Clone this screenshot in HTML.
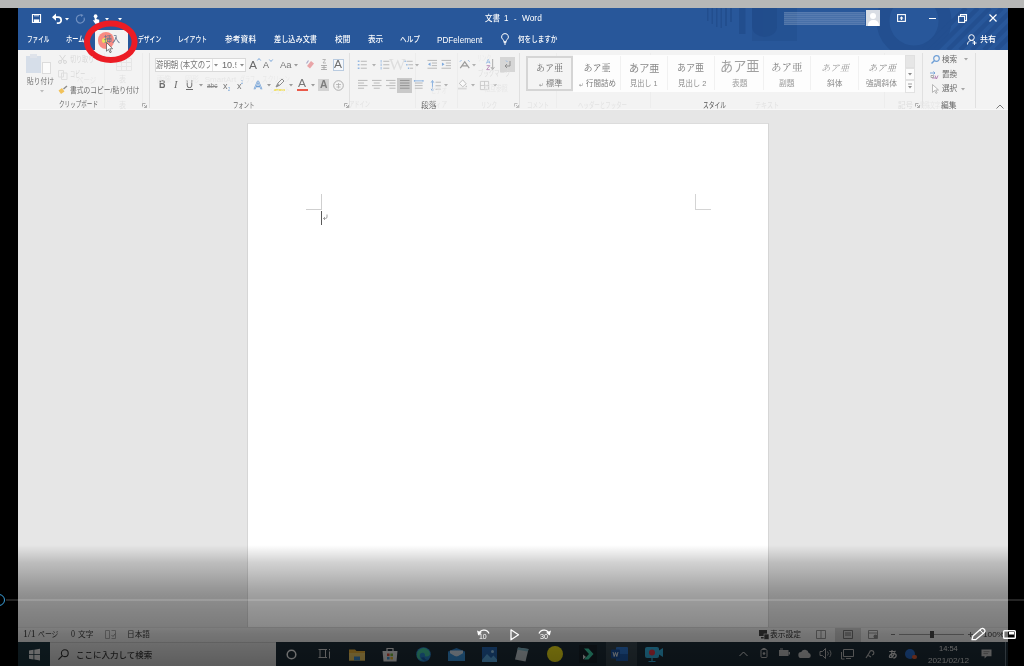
<!DOCTYPE html>
<html lang="ja">
<head>
<meta charset="utf-8">
<title>文書 1 - Word</title>
<style>
html,body{margin:0;padding:0;}
body{width:1024px;height:666px;overflow:hidden;background:#000;position:relative;
  font-family:"Liberation Sans","Noto Sans CJK JP",sans-serif;font-size:8px;color:#444;}
.abs,.t,svg.i{position:absolute;}
.t{white-space:nowrap;line-height:12px;transform-origin:0 50%;}
svg.i{overflow:visible;}
#win{left:0;top:0;width:1024px;height:666px;background:#e6e6e6;overflow:hidden;filter:blur(0.45px);}
#title{left:0;top:8px;width:1024px;height:42px;background:#28579a;overflow:hidden;}
#ribbon{left:0;top:50px;width:1024px;height:60px;background:#f3f3f3;overflow:hidden;}
#ribbon .sep{position:absolute;top:3px;width:1px;height:55px;background:#e0e0e0;}
#page{left:247px;top:123px;width:522px;height:504px;background:#fff;border-left:1px solid #d6d6d6;border-right:1px solid #d6d6d6;border-top:1px solid #dcdcdc;box-sizing:border-box;}
#status{left:0;top:627px;width:1024px;height:15px;background:#eeeeee;border-top:1px solid #dddddd;box-sizing:border-box;}
#taskbar{left:0;top:641.500px;width:1024px;height:24.500px;background:#1d2d38;}
#shade{left:0;top:540px;width:1024px;height:126px;
  background:linear-gradient(to bottom,rgba(0,0,0,0) 0%,rgba(0,0,0,0) 4%,rgba(0,0,0,0.10) 12%,rgba(0,0,0,0.18) 18%,rgba(0,0,0,0.23) 24.600%,rgba(0,0,0,0.29) 31.700%,rgba(0,0,0,0.34) 38%,rgba(0,0,0,0.38) 44.400%,rgba(0,0,0,0.43) 58%,rgba(0,0,0,0.46) 67.500%,rgba(0,0,0,0.51) 74.600%,rgba(0,0,0,0.57) 90.500%,rgba(0,0,0,0.60) 100%);}
#barL{left:0;top:8px;width:18px;height:658px;background:#000;}
#barR{left:1008px;top:8px;width:16px;height:658px;background:#000;}
#topgray{left:0;top:0;width:1024px;height:8px;background:#b7b8b7;}
</style>
</head>
<body>
<div id="win" class="abs">
<div id="title" class="abs">
  <!-- decorative background pattern -->
  <svg class="i" style="left:0;top:0" width="1024" height="42" viewBox="0 0 1024 42">
    <g fill="#204b8a" opacity="0.7">
      <rect x="707" y="0" width="1.500" height="13"/><rect x="711.500" y="0" width="1.500" height="16"/>
      <rect x="716" y="0" width="1.500" height="19"/><rect x="720.500" y="0" width="1.500" height="20"/>
      <rect x="725" y="0" width="2" height="18"/><rect x="730" y="0" width="2" height="14"/>
      <rect x="739" y="0" width="6.500" height="26"/>
      <path d="M752 0h25v19a12.500 10 0 0 1-25 0z"/>
    </g>
    <g fill="#204b8a" opacity="0.4"><rect x="777" y="0" width="20" height="33"/><rect x="752" y="0" width="25" height="33"/></g>
    <g fill="none" stroke="#204b8a" opacity="0.62">
      <circle cx="914" cy="13" r="31" stroke-width="13"/>
      <path d="M924 42 L966 0 M936 42 L978 0 M948 42 L990 0 M960 42 L1002 0 M972 42 L1014 0 M984 42 L1020 6 M996 42 L1020 18" stroke-width="4.500"/>
    </g>
  </svg>
  <!-- quick access toolbar -->
  <svg class="i" style="left:32.300px;top:6px" width="9" height="9" viewBox="0 0 10 10"><path d="M0.5 0.5h9v9h-9z" fill="none" stroke="#fff" stroke-width="1.2"/><rect x="2" y="6" width="6" height="3.5" fill="#fff"/><rect x="2.2" y="0.5" width="5.6" height="2.2" fill="#fff" opacity=".55"/></svg>
  <svg class="i" style="left:52px;top:5px" width="11" height="11" viewBox="0 0 11 11"><path d="M1 4.2h5.2a3 3 0 0 1 0 6h-1.400" fill="none" stroke="#fff" stroke-width="1.7"/><path d="M0 4.200l4-3.600v7.200z" fill="#fff"/></svg>
  <svg class="i" style="left:65px;top:10px" width="4" height="3" viewBox="0 0 4 3"><path d="M0 0h4l-2 2.500z" fill="#fff"/></svg>
  <svg class="i" style="left:75px;top:6px" width="10" height="10" viewBox="0 0 10 10"><path d="M6.500 1.200a4 4 0 1 0 2.600 2.400" fill="none" stroke="#6f8fc0" stroke-width="1.200"/><path d="M5.500 0l3 1-2.200 2z" fill="#6f8fc0"/></svg>
  <svg class="i" style="left:92px;top:5.500px" width="8" height="10.500" viewBox="0 0 10 13"><circle cx="4.500" cy="2.600" r="2.300" fill="#fff"/><path d="M3.300 4v4l-2.300-0.500 3 4.500h5v-4.800l-3.500-1v-2.500z" fill="#fff"/></svg>
  <svg class="i" style="left:105px;top:10px" width="4" height="3" viewBox="0 0 4 3"><path d="M0 0h4l-2 2.500z" fill="#fff"/></svg>
  <svg class="i" style="left:118px;top:10px" width="4" height="3" viewBox="0 0 4 3"><path d="M0 0h4l-2 2.500z" fill="#fff"/></svg>
  <!-- blurred account name -->
  <div class="abs" style="left:784px;top:4px;width:81px;height:13px;background:repeating-linear-gradient(to bottom,rgba(255,255,255,.22) 0,rgba(255,255,255,.22) 1px,rgba(255,255,255,.15) 1px,rgba(255,255,255,.15) 2px);filter:blur(.6px);"></div>
  <!-- avatar -->
  <div class="abs" style="left:866px;top:2px;width:14px;height:16px;background:#d9dde4;overflow:hidden;">
    <div class="abs" style="left:4px;top:3px;width:6px;height:6px;border-radius:50%;background:#fff;"></div>
    <div class="abs" style="left:1.500px;top:10px;width:11px;height:10px;border-radius:5px 5px 0 0;background:#fff;"></div>
  </div>
  <!-- window buttons -->
  <svg class="i" style="left:897px;top:6px" width="9" height="8" viewBox="0 0 9 8"><rect x=".6" y=".6" width="7.800" height="6.800" fill="none" stroke="#fff" stroke-width="1.100"/><path d="M4.500 2.300l2 2.200h-1.300v1.500h-1.400v-1.500h-1.300z" fill="#fff"/></svg>
  <div class="abs" style="left:929px;top:10px;width:7px;height:1px;background:#fff;"></div>
  <svg class="i" style="left:958px;top:6px" width="9" height="9" viewBox="0 0 9 9"><rect x=".6" y="2.400" width="6" height="6" fill="none" stroke="#fff" stroke-width="1.100"/><path d="M2.500 2.400v-1.800h6v6h-1.900" fill="none" stroke="#fff" stroke-width="1.100"/></svg>
  <svg class="i" style="left:989px;top:6px" width="8" height="8" viewBox="0 0 8 8"><path d="M.5 .5l7 7M7.500 .5l-7 7" stroke="#fff" stroke-width="1.200"/></svg>
  <!-- tabs -->
  <div class="abs" style="left:95px;top:22px;width:33px;height:20px;background:#f3f3f3;"></div>
  <svg class="i" style="left:501px;top:25px" width="8" height="12" viewBox="0 0 8 12"><path d="M4 .6a3.300 3.300 0 0 1 2 6c-.5.500-.6 1-.6 1.800h-2.800c0-.8-.1-1.300-.6-1.800a3.300 3.300 0 0 1 2-6z" fill="none" stroke="#fff" stroke-width="1"/><path d="M2.700 9.600h2.600M3 11h2" stroke="#fff" stroke-width="1"/></svg>
  <svg class="i" style="left:967px;top:26px" width="10" height="11" viewBox="0 0 10 11"><circle cx="4.500" cy="3.500" r="2.800" fill="none" stroke="#fff" stroke-width="1"/><path d="M.5 10.500c0-2.500 1.700-4 4-4s2.500.7 3 1.500M7.500 7v4M5.500 9h4" fill="none" stroke="#fff" stroke-width="1"/></svg>
</div>

<div id="ribbon" class="abs">
  <div class="abs" style="left:0;top:59px;width:1024px;height:1px;background:#f8f8f8;"></div>
  <!-- group separators -->
  <div class="sep" style="left:149px;"></div>
  <div class="sep" style="left:349px;"></div>
  <div class="sep" style="left:519px;"></div>
  <div class="sep" style="left:922px;"></div>
  <div class="sep" style="left:975px;"></div>
  <!-- ghost separators from fading tab -->
  <div class="sep" style="left:104px;background:#ececec;"></div>
  <div class="sep" style="left:142px;background:#ececec;"></div>
  <div class="sep" style="left:415px;background:#ececec;"></div>
  <div class="sep" style="left:457px;background:#ececec;"></div>
  <div class="sep" style="left:556px;background:#ededed;"></div>
  <div class="sep" style="left:650px;background:#ededed;"></div>
  <div class="sep" style="left:884px;background:#ededed;"></div>

  <!-- CLIPBOARD -->
  <div class="abs" style="left:26px;top:5.500px;width:15px;height:17px;background:#d6dee9;"></div>
  <div class="abs" style="left:30px;top:3.500px;width:7px;height:4px;background:#dfe3ea;"></div>
  <div class="abs" style="left:41.500px;top:12px;width:9px;height:12px;background:#fbfbfb;border:1px solid #dcdcdc;box-sizing:border-box;"></div>
  <svg class="i" style="left:39.500px;top:40px" width="4" height="3" viewBox="0 0 4 3"><path d="M0 0h4l-2 2.500z" fill="#bdbdbd"/></svg>
  <svg class="i" style="left:58px;top:5px" width="9" height="9" viewBox="0 0 9 9"><path d="M1.500 0l4.500 6M7.500 0l-4.500 6" stroke="#d8d8d8" stroke-width="1" fill="none"/><circle cx="2" cy="7" r="1.500" fill="none" stroke="#d8d8d8"/><circle cx="7" cy="7" r="1.500" fill="none" stroke="#d8d8d8"/></svg>
  <svg class="i" style="left:58px;top:20px" width="10" height="10" viewBox="0 0 10 10"><path d="M.5 .5h5v6.500h-5zM3.500 3h5.500v6.500h-5.500z" fill="#f3f3f3" stroke="#dedede" stroke-width="1"/></svg>
  <svg class="i" style="left:58px;top:36px" width="10" height="9" viewBox="0 0 10 9"><path d="M.5 4.500l3.500-2.500 2.500 3.500-3.500 2.500z" fill="#f2c25a"/><path d="M5.500 3l3.500-3" stroke="#8a8a8a" stroke-width="1.400"/></svg>
  <svg class="i" style="left:141.500px;top:53px" width="5" height="5" viewBox="0 0 5 5"><path d="M.5 .5h3M.5 .5v3M4.500 2v2.500h-2.500M2 2l2.300 2.300" fill="none" stroke="#9a9a9a" stroke-width=".8"/></svg>
  <!-- ghost table icon -->
  <svg class="i" style="left:116px;top:7.500px" width="16" height="13" viewBox="0 0 16 13"><path d="M.5 .5h15v12h-15zM.5 4.500h15M.5 8.500h15M5.500 .5v12M10.500 .5v12" fill="none" stroke="#e6e6e6" stroke-width="1"/></svg>

  <!-- FONT -->
  <div class="abs" style="left:154.500px;top:7.500px;width:66px;height:14.500px;background:#fdfdfd;border:1px solid #d9d9d9;box-sizing:border-box;"></div>
  <div class="abs" style="left:220px;top:7.500px;width:25.500px;height:14.500px;background:#fdfdfd;border:1px solid #d9d9d9;border-left:none;box-sizing:border-box;"></div>
  <div class="abs" style="left:211.500px;top:8.500px;width:1px;height:12.500px;background:#e4e4e4;"></div>
  <svg class="i" style="left:213.500px;top:13.500px" width="4" height="3" viewBox="0 0 4 3"><path d="M0 0h4l-2 2.500z" fill="#8a8a8a"/></svg>
  <svg class="i" style="left:239.500px;top:13.500px" width="4" height="3" viewBox="0 0 4 3"><path d="M0 0h4l-2 2.500z" fill="#8a8a8a"/></svg>
  <!-- row1 small icons -->
  <svg class="i" style="left:257px;top:8px" width="4" height="3" viewBox="0 0 4 3"><path d="M.3 2.500l1.700-2 1.700 2" fill="none" stroke="#6f9fd6" stroke-width=".9"/></svg>
  <svg class="i" style="left:268.500px;top:8.500px" width="4" height="3" viewBox="0 0 4 3"><path d="M.3 .5l1.700 2 1.700-2" fill="none" stroke="#6f9fd6" stroke-width=".9"/></svg>
  <svg class="i" style="left:294px;top:14px" width="4" height="3" viewBox="0 0 4 3"><path d="M0 0h4l-2 2.500z" fill="#9a9a9a"/></svg>
  <svg class="i" style="left:306px;top:10px" width="9" height="9" viewBox="0 0 9 9"><path d="M1 6l4-5 3 2.500-4 5z" fill="#e9a5a8"/><path d="M.5 3.500l2-3" stroke="#a9a9c8" stroke-width="1.200"/></svg>
  <svg class="i" style="left:320px;top:8.500px" width="8" height="12" viewBox="0 0 8 12"><path d="M1 6.500h6M1.500 8.500h5M1 10.500h6M4 6v5" stroke="#a8a8a8" stroke-width=".9" fill="none"/><path d="M2.500 .5h3l-2.500 3.500h3" stroke="#a8a8a8" stroke-width=".8" fill="none"/></svg>
  <div class="abs" style="left:332.500px;top:8.500px;width:11px;height:12px;border:1px solid #b9cbe0;box-sizing:border-box;background:#f6f8fb;"></div>
  <!-- row2 -->
  <svg class="i" style="left:198.500px;top:34px" width="4" height="3" viewBox="0 0 4 3"><path d="M0 0h4l-2 2.500z" fill="#9a9a9a"/></svg>
  <svg class="i" style="left:266.500px;top:34px" width="4" height="3" viewBox="0 0 4 3"><path d="M0 0h4l-2 2.500z" fill="#9a9a9a"/></svg>
  <svg class="i" style="left:288.500px;top:34px" width="4" height="3" viewBox="0 0 4 3"><path d="M0 0h4l-2 2.500z" fill="#9a9a9a"/></svg>
  <svg class="i" style="left:311px;top:34px" width="4" height="3" viewBox="0 0 4 3"><path d="M0 0h4l-2 2.500z" fill="#9a9a9a"/></svg>
  <div class="abs" style="left:274px;top:38.500px;width:11px;height:2.500px;background:#f3e36a;"></div>
  <svg class="i" style="left:275px;top:29px" width="10" height="9" viewBox="0 0 10 9"><path d="M1 8l2-4 4-4 2 2-4 4z" fill="none" stroke="#8d8d8d" stroke-width="1"/><path d="M1 8l3.500-1.500-1.500-2z" fill="#8d8d8d"/></svg>
  <div class="abs" style="left:296.500px;top:38.500px;width:11px;height:2.500px;background:#ea5a4a;"></div>
  <div class="abs" style="left:317.500px;top:28.500px;width:11.500px;height:12.500px;background:#d3d3d3;"></div>
  <svg class="i" style="left:333px;top:29.500px" width="11" height="11" viewBox="0 0 11 11"><circle cx="5.500" cy="5.500" r="4.800" fill="none" stroke="#a5a5a5" stroke-width=".9"/><path d="M3 4.500h5M3.500 7h4M5.500 3v5.500" stroke="#b0b0b0" stroke-width=".8"/></svg>
  <svg class="i" style="left:344px;top:53px" width="5" height="5" viewBox="0 0 5 5"><path d="M.5 .5h3M.5 .5v3M4.500 2v2.500h-2.500M2 2l2.300 2.300" fill="none" stroke="#9a9a9a" stroke-width=".8"/></svg>

  <!-- PARAGRAPH -->
  <!-- bullets -->
  <svg class="i" style="left:356.500px;top:9.500px" width="11" height="9.500" viewBox="0 0 11 11"><path d="M3.500 1.500h7M3.500 5.500h7M3.500 9.500h7" stroke="#b0b0b0" stroke-width="1"/><path d="M0 .7h2v1.600h-2zM0 4.700h2v1.600h-2zM0 8.700h2v1.600h-2z" fill="#93b7e2"/></svg>
  <svg class="i" style="left:371.500px;top:14px" width="4" height="3" viewBox="0 0 4 3"><path d="M0 0h4l-2 2.500z" fill="#b0b0b0"/></svg>
  <svg class="i" style="left:379.500px;top:9.500px" width="10" height="9.500" viewBox="0 0 11 11"><path d="M3.500 1.500h7M3.500 5.500h7M3.500 9.500h7" stroke="#b0b0b0" stroke-width="1"/><path d="M1 0v3M1 4v3M1 8v3" stroke="#93b7e2" stroke-width="1"/></svg>
  <svg class="i" style="left:403.500px;top:9.500px" width="9.500" height="9.500" viewBox="0 0 11 11"><path d="M3 1.500h7M5 5.500h5.500M7 9.500h3.500" stroke="#b0b0b0" stroke-width="1"/><path d="M.5 .7h1.600v1.600h-1.600zM2.500 4.700h1.600v1.600h-1.600zM4.500 8.700h1.600v1.600h-1.600z" fill="#93b7e2"/></svg>
  <svg class="i" style="left:415px;top:14px" width="4" height="3" viewBox="0 0 4 3"><path d="M0 0h4l-2 2.500z" fill="#b0b0b0"/></svg>
  <!-- indent -->
  <svg class="i" style="left:426.500px;top:9.500px" width="10.500" height="9.500" viewBox="0 0 11 11"><path d="M0 .5h11M5 3.500h6M5 6.500h6M0 9.500h11" stroke="#b0b0b0" stroke-width="1"/><path d="M3.500 3v4l-3-2z" fill="#7eaade"/></svg>
  <svg class="i" style="left:441px;top:9.500px" width="10.500" height="9.500" viewBox="0 0 11 11"><path d="M0 .5h11M5 3.500h6M5 6.500h6M0 9.500h11" stroke="#b0b0b0" stroke-width="1"/><path d="M.5 3v4l3-2z" fill="#7eaade"/></svg>
  <!-- asian layout -->
  <svg class="i" style="left:459px;top:10px" width="11.500" height="9" viewBox="0 0 12 10"><path d="M1 9l5-7 5 7M3 6.500h6" fill="none" stroke="#9c9c9c" stroke-width="1.300"/><path d="M.5 2l2-2M9.500 0l2 2" stroke="#93b7e2" stroke-width="1"/></svg>
  <svg class="i" style="left:472px;top:14px" width="4" height="3" viewBox="0 0 4 3"><path d="M0 0h4l-2 2.500z" fill="#b0b0b0"/></svg>
  <!-- sort -->
  <svg class="i" style="left:485.500px;top:8.500px" width="8" height="11.500" viewBox="0 0 9 13"><path d="M7.500 0v11M5.500 9l2 3 2-3" fill="none" stroke="#9c9c9c" stroke-width=".9"/><path d="M.5 5l2-4.500 2 4.500M1.200 3.500h2.600" fill="none" stroke="#7eaade" stroke-width=".9"/><path d="M.7 7.500h3.600l-3.600 4.500h3.600" fill="none" stroke="#b07ab0" stroke-width=".9"/></svg>
  <!-- show marks -->
  <div class="abs" style="left:500px;top:7px;width:14.500px;height:15px;background:#d6d6d6;"></div>
  <svg class="i" style="left:503px;top:10px" width="9" height="9" viewBox="0 0 9 9"><path d="M7 1v5h-5M4 4l-2 2 2 2" fill="none" stroke="#8a8a8a" stroke-width=".9"/><path d="M3 .5l1.500 1.500" stroke="#93b7e2" stroke-width=".9"/></svg>
  <!-- row 2 alignment -->
  <svg class="i" style="left:358px;top:30px" width="9.500" height="9.500" viewBox="0 0 11 11"><path d="M0 .5h11M0 3.500h7M0 6.500h11M0 9.500h7" stroke="#b0b0b0" stroke-width="1"/></svg>
  <svg class="i" style="left:372px;top:30px" width="9.500" height="9.500" viewBox="0 0 11 11"><path d="M0 .5h11M2 3.500h7M0 6.500h11M2 9.500h7" stroke="#b0b0b0" stroke-width="1"/></svg>
  <svg class="i" style="left:386px;top:30px" width="9.500" height="9.500" viewBox="0 0 11 11"><path d="M0 .5h11M4 3.500h7M0 6.500h11M4 9.500h7" stroke="#b0b0b0" stroke-width="1"/></svg>
  <div class="abs" style="left:397px;top:27.500px;width:14.500px;height:15px;background:#c9c9c9;"></div>
  <svg class="i" style="left:400px;top:30px" width="9.500" height="9.500" viewBox="0 0 11 11"><path d="M0 .5h11M0 3.500h11M0 6.500h11M0 9.500h11" stroke="#8a8a8a" stroke-width="1"/></svg>
  <svg class="i" style="left:414px;top:30px" width="9.500" height="9.500" viewBox="0 0 11 11"><path d="M1 3.500h9M1 6.500h9M1 9.500h9" stroke="#b0b0b0" stroke-width="1"/><path d="M.5 0v2M10.500 0v2M.5 1h10" stroke="#7eaade" stroke-width="1" fill="none"/></svg>
  <svg class="i" style="left:431px;top:29.500px" width="10" height="11.500" viewBox="0 0 11 13"><path d="M5 2.500h6M5 6.500h6M5 10.500h6" stroke="#b0b0b0" stroke-width="1"/><path d="M1.500 1.500v10M0 3l1.500-2.500 1.500 2.500M0 10l1.500 2.500 1.500-2.500" fill="none" stroke="#7eaade" stroke-width="1"/></svg>
  <svg class="i" style="left:444px;top:34px" width="4" height="3" viewBox="0 0 4 3"><path d="M0 0h4l-2 2.500z" fill="#b0b0b0"/></svg>
  <svg class="i" style="left:458px;top:29px" width="9.500" height="10.500" viewBox="0 0 11 12"><path d="M1.500 5l4-4 4 4.500-4 3.500z" fill="#fafafa" stroke="#b0b0b0" stroke-width=".9"/><path d="M9.500 7.500c.7 1 .9 1.500 0 2-.9-.5-.7-1 0-2z" fill="#b0b0b0"/><path d="M0 11h10" stroke="#d8d8d8" stroke-width="2"/></svg>
  <svg class="i" style="left:470.500px;top:34px" width="4" height="3" viewBox="0 0 4 3"><path d="M0 0h4l-2 2.500z" fill="#b0b0b0"/></svg>
  <svg class="i" style="left:479.500px;top:30.500px" width="9" height="9" viewBox="0 0 11 11"><path d="M.5 .5h10v10h-10zM5.500 .5v10M.5 5.500h10" fill="none" stroke="#c0c0c0" stroke-width=".9"/></svg>
  <svg class="i" style="left:492.800px;top:34px" width="4" height="3" viewBox="0 0 4 3"><path d="M0 0h4l-2 2.500z" fill="#b0b0b0"/></svg>
  <svg class="i" style="left:513.500px;top:53px" width="5" height="5" viewBox="0 0 5 5"><path d="M.5 .5h3M.5 .5v3M4.500 2v2.500h-2.500M2 2l2.300 2.300" fill="none" stroke="#b0b0b0" stroke-width=".8"/></svg>

  <!-- STYLES gallery -->
  <div class="abs" style="left:573px;top:4.500px;width:332px;height:37px;background:#fdfdfd;"></div>
  <div class="abs" style="left:525.500px;top:5.500px;width:47.500px;height:35.500px;background:#f4f4f4;border:2px solid #d5d5d5;box-sizing:border-box;"></div>
  <div class="abs" style="left:619.500px;top:6px;width:1px;height:34px;background:#f1f1f1;"></div>
  <div class="abs" style="left:666.500px;top:6px;width:1px;height:34px;background:#f1f1f1;"></div>
  <div class="abs" style="left:714px;top:6px;width:1px;height:34px;background:#f1f1f1;"></div>
  <div class="abs" style="left:763px;top:6px;width:1px;height:34px;background:#f1f1f1;"></div>
  <div class="abs" style="left:810px;top:6px;width:1px;height:34px;background:#f1f1f1;"></div>
  <div class="abs" style="left:858px;top:6px;width:1px;height:34px;background:#f1f1f1;"></div>
  <!-- gallery scroll buttons -->
  <div class="abs" style="left:905px;top:4.500px;width:10px;height:13.500px;background:#e6e6e6;border:1px solid #e0e0e0;box-sizing:border-box;"></div>
  <div class="abs" style="left:905px;top:18px;width:10px;height:12px;background:#fcfcfc;border:1px solid #e2e2e2;box-sizing:border-box;"></div>
  <div class="abs" style="left:905px;top:30px;width:10px;height:12.500px;background:#fcfcfc;border:1px solid #e2e2e2;box-sizing:border-box;"></div>
  <svg class="i" style="left:908px;top:23px" width="4" height="3" viewBox="0 0 4 3"><path d="M0 0h4l-2 2.500z" fill="#8a8a8a"/></svg>
  <svg class="i" style="left:908px;top:34px" width="4" height="5" viewBox="0 0 4 5"><path d="M0 0h4" stroke="#8a8a8a" stroke-width=".8"/><path d="M0 2h4l-2 2.500z" fill="#8a8a8a"/></svg>
  <svg class="i" style="left:914.500px;top:53px" width="5" height="5" viewBox="0 0 5 5"><path d="M.5 .5h3M.5 .5v3M4.500 2v2.500h-2.500M2 2l2.300 2.300" fill="none" stroke="#9a9a9a" stroke-width=".8"/></svg>

  <!-- EDITING -->
  <svg class="i" style="left:931px;top:5.300px" width="9" height="9" viewBox="0 0 9 9"><circle cx="5.500" cy="3.500" r="2.800" fill="none" stroke="#6f9fd6" stroke-width="1.200"/><path d="M3.500 5.500l-3 3" stroke="#6f9fd6" stroke-width="1.400"/></svg>
  <svg class="i" style="left:964px;top:8px" width="4" height="3" viewBox="0 0 4 3"><path d="M0 0h4l-2 2.500z" fill="#a5a5a5"/></svg>
  <svg class="i" style="left:930px;top:20.500px" width="10" height="9" viewBox="0 0 10 9"><path d="M0 2h5M3.500 .5l1.500 1.500-1.500 1.500" fill="none" stroke="#6f9fd6" stroke-width=".9"/><path d="M5 4.500l1.500 3.500M8 4.500l-1.500 3.500M2 7h4" fill="none" stroke="#b07ab0" stroke-width=".9"/><path d="M1 4.500h2.500v2h-2.500z" fill="none" stroke="#9a9a9a" stroke-width=".8"/></svg>
  <svg class="i" style="left:932px;top:33.500px" width="7" height="10" viewBox="0 0 7 10"><path d="M.5 .5v8l2-2 1.500 3 1.200-.6-1.500-2.900h2.800z" fill="#fbfbfb" stroke="#a8a8a8" stroke-width=".8"/></svg>
  <svg class="i" style="left:961px;top:38px" width="4" height="3" viewBox="0 0 4 3"><path d="M0 0h4l-2 2.500z" fill="#a5a5a5"/></svg>
  <!-- collapse ribbon chevron -->
  <svg class="i" style="left:996px;top:53.500px" width="8" height="5" viewBox="0 0 8 5"><path d="M.5 4.500l3.500-3.500 3.500 3.500" fill="none" stroke="#7a7a7a" stroke-width="1"/></svg>
</div>

<div id="page" class="abs"></div>
<!-- margin crop marks -->
<div class="abs" style="left:321px;top:194px;width:1px;height:15px;background:#cfcfcf;"></div>
<div class="abs" style="left:306px;top:208.500px;width:16px;height:1px;background:#cfcfcf;"></div>
<div class="abs" style="left:694.500px;top:194px;width:1px;height:15.500px;background:#d4d4d4;"></div>
<div class="abs" style="left:694.500px;top:208.500px;width:16px;height:1px;background:#d4d4d4;"></div>
<!-- text cursor + paragraph mark -->
<div class="abs" style="left:321px;top:210.500px;width:1px;height:14.500px;background:#5a5a5a;"></div>
<svg class="i" style="left:322.500px;top:214px" width="5" height="6" viewBox="0 0 5 6"><path d="M4 .5v2.500a1.500 1.500 0 0 1-1.500 1.500h-2M2 3l-1.500 1.500 1.500 1.500" fill="none" stroke="#8a8a8a" stroke-width=".8"/></svg>
<!-- click highlight + annotation ellipse + mouse pointer -->
<div class="abs" style="left:97.500px;top:32px;width:16.500px;height:16.500px;border-radius:50%;background:rgba(250,108,98,.78);"></div>
<div class="abs" style="left:101.800px;top:37.500px;width:5.500px;height:5.500px;border-radius:50%;background:#ece45a;filter:blur(.6px);"></div>
<svg class="i" style="left:80px;top:16px" width="62" height="52" viewBox="0 0 62 52"><ellipse cx="30.800" cy="25.700" rx="23.800" ry="18.200" fill="none" stroke="#ec1c24" stroke-width="6"/></svg>
<svg class="i" style="left:106px;top:41.500px" width="7.800" height="11.300" viewBox="0 0 9 13"><path d="M.6 .6v10l2.300-2.200 1.700 3.900 1.500-.7-1.700-3.800h3.200z" fill="#fff" stroke="#4a4a4a" stroke-width=".8" stroke-linejoin="round"/></svg>

<div id="status" class="abs"></div>
<!-- proofing icon -->
<svg class="i" style="left:105px;top:629.500px" width="11" height="9" viewBox="0 0 11 9"><path d="M.5 .5h4v8h-4zM6.500 .5h4v8h-4" fill="none" stroke="#a0a0a0" stroke-width=".9"/><path d="M6.500 5l1.500 1.500 2.500-3" fill="none" stroke="#8a8a8a" stroke-width=".9"/></svg>
<!-- display settings icon -->
<svg class="i" style="left:759px;top:629.500px" width="10" height="10" viewBox="0 0 10 10"><rect x="0" y="0" width="8" height="6" fill="#444"/><rect x="2" y="7" width="4" height="1.500" fill="#444"/><rect x="5" y="4" width="5" height="5.500" fill="#444" stroke="#f3f3f3" stroke-width=".6"/></svg>
<!-- view buttons -->
<svg class="i" style="left:816px;top:630px" width="10" height="9" viewBox="0 0 10 9"><path d="M.5 .5h9v8h-9zM5 .5v8" fill="none" stroke="#8a8a8a" stroke-width=".9"/></svg>
<div class="abs" style="left:835px;top:628px;width:25.500px;height:14px;background:#cdcdcd;"></div>
<svg class="i" style="left:842.500px;top:630px" width="10" height="9" viewBox="0 0 10 9"><path d="M.5 .5h9v8h-9zM2 3h6M2 5h6" fill="none" stroke="#6a6a6a" stroke-width=".9"/></svg>
<svg class="i" style="left:868px;top:630px" width="10" height="9" viewBox="0 0 10 9"><path d="M.5 .5h9v8h-9zM.5 3h9" fill="none" stroke="#8a8a8a" stroke-width=".9"/><circle cx="7.500" cy="6.500" r="2" fill="#8a8a8a"/></svg>
<!-- zoom slider -->
<div class="abs" style="left:890.500px;top:633.500px;width:4.500px;height:1px;background:#7a7a7a;"></div>
<div class="abs" style="left:899px;top:633.500px;width:65px;height:1px;background:#9a9a9a;"></div>
<div class="abs" style="left:929.500px;top:630.500px;width:4px;height:7.500px;background:#4a4a4a;"></div>
<div class="abs" style="left:967.500px;top:633.500px;width:5px;height:1px;background:#7a7a7a;"></div>
<div class="abs" style="left:969.500px;top:631.500px;width:1px;height:5px;background:#7a7a7a;"></div>

<div id="taskbar" class="abs">
  <div class="abs" style="left:0;top:0;width:50px;height:24.500px;background:#1d3640;"></div>
  <div class="abs" style="left:50px;top:0;width:226px;height:24.500px;background:#e9e9e9;border-top:1px solid #cfcfcf;box-sizing:border-box;"></div>
  <!-- windows logo -->
  <svg class="i" style="left:29px;top:7.500px" width="11" height="11" viewBox="0 0 11 11"><path d="M0 1.500l4.500-.7v4.400h-4.500zM5.300 .7l5.700-.9v5.400h-5.700zM0 6h4.500v4.400l-4.500-.7zM5.300 6h5.700v5.400l-5.700-.9z" fill="#f0f0f0"/></svg>
  <!-- search icon -->
  <svg class="i" style="left:58px;top:7.500px" width="11" height="11" viewBox="0 0 11 11"><circle cx="6.800" cy="4.200" r="3.400" fill="none" stroke="#333" stroke-width="1.100"/><path d="M4.400 6.600l-4 4" stroke="#333" stroke-width="1.200"/></svg>
  <!-- cortana -->
  <svg class="i" style="left:286px;top:7px" width="11" height="11" viewBox="0 0 11 11"><circle cx="5.500" cy="5.500" r="4.300" fill="none" stroke="#fff" stroke-width="1.500"/></svg>
  <!-- task view -->
  <svg class="i" style="left:317.500px;top:6.500px" width="13" height="11" viewBox="0 0 13 11"><path d="M.5 1.500h8.500M.5 9.500h8.500M2 1.500v8M7.500 1.500v8M11.500 3.500v7" fill="none" stroke="#d8d8d8" stroke-width="1"/><rect x="11" y="1" width="1" height="1.200" fill="#d8d8d8"/></svg>
  <!-- explorer -->
  <svg class="i" style="left:349px;top:6px" width="16" height="13" viewBox="0 0 16 13"><path d="M0 1.500h6l1.500 1.500h8.500v9.500h-16z" fill="#f0b73c"/><path d="M0 5h16v7.500h-16z" fill="#f7d36b"/><rect x="5" y="8.500" width="6" height="4" fill="#3f8fd6"/></svg>
  <!-- store -->
  <svg class="i" style="left:382px;top:5px" width="16" height="15" viewBox="0 0 16 15"><path d="M5 4v-2.500h6v2.500" fill="none" stroke="#e8e8e8" stroke-width="1.200"/><path d="M.5 4h15l-1 10.500h-13z" fill="#efefef"/><rect x="5" y="6.500" width="2.600" height="2.600" fill="#e8513a"/><rect x="8.400" y="6.500" width="2.600" height="2.600" fill="#7cbf3f"/><rect x="5" y="9.900" width="2.600" height="2.600" fill="#3f9fe0"/><rect x="8.400" y="9.900" width="2.600" height="2.600" fill="#f5c33b"/></svg>
  <!-- edge -->
  <svg class="i" style="left:416px;top:5px" width="15" height="15" viewBox="0 0 15 15"><circle cx="7.500" cy="7.500" r="7.300" fill="#2b8fd9"/><path d="M1 9a6.500 6.500 0 0 1 13-2.500c0 2-1.500 3-3.500 3-1.500 0-2-.8-1.500-1.800-.5-2-3-2.500-4.500-1.200-1.500 1.400-1 4.500 1.500 6.500-3-.3-5-2-5-4z" fill="#46d3a8"/><path d="M5 10.500c1 3 4.500 4 7.500 2.500-2 .3-4-1-4.200-2.700z" fill="#1c63b5"/></svg>
  <!-- mail -->
  <svg class="i" style="left:448px;top:6px" width="17" height="13" viewBox="0 0 17 13"><path d="M0 3.500l8.500-3.500 8.500 3.500v9.500h-17z" fill="#2f87d3"/><path d="M2 2.500h13v6h-13z" fill="#dbe9f7"/><path d="M0 4l8.500 5 8.500-5v9h-17z" fill="#3c9be6"/></svg>
  <!-- photos -->
  <svg class="i" style="left:482px;top:5px" width="15" height="15" viewBox="0 0 15 15"><rect width="15" height="15" fill="#2467b5"/><path d="M0 13l5-6 4 4 2.500-2.500 3.500 4v2.500h-15z" fill="#5db1ee"/><circle cx="10.500" cy="4.500" r="1.500" fill="#9fd3f7"/></svg>
  <!-- notepad-like -->
  <svg class="i" style="left:514px;top:5px" width="15" height="15" viewBox="0 0 15 15"><path d="M4 .5l10.500 1.500-3 12.500-10.500-2z" fill="#c9d3d8"/><path d="M4 .5l10.500 1.500-.6 2.500-10.500-1.700z" fill="#7fb6c9"/></svg>
  <!-- yellow circle -->
  <div class="abs" style="left:547px;top:4px;width:16px;height:16px;border-radius:50%;background:#f2e419;"></div>
  <!-- filmora-like -->
  <div class="abs" style="left:579px;top:3px;width:18px;height:18px;background:#17212a;"></div>
  <svg class="i" style="left:583px;top:6px" width="11" height="12" viewBox="0 0 11 12"><path d="M1 .5h4.500l5 5.500-5 5.500h-4.500l5-5.500z" fill="#3fd8b0"/><path d="M0 6.500l3 2.500-3 2.500z" fill="#e8e8e8"/></svg>
  <!-- word (active) -->
  <div class="abs" style="left:605.500px;top:0;width:31px;height:24px;background:#37464f;"></div>
    <svg class="i" style="left:611px;top:5px" width="17" height="14" viewBox="0 0 17 14"><rect x="5" y="0" width="12" height="14" rx="1" fill="#2f7bd9"/><rect x="5" y="7" width="12" height="7" fill="#1f5fb5"/><rect x="0" y="2.500" width="9" height="9" rx="1" fill="#1b54a6"/><path d="M2 5l1.200 4.500 1.300-4 1.300 4 1.200-4.500" fill="none" stroke="#fff" stroke-width=".9"/></svg>
  <!-- recorder -->
  <svg class="i" style="left:645px;top:5px" width="18" height="15" viewBox="0 0 18 15"><rect x="0" y="0" width="14" height="11" rx="2" fill="#35b7e8"/><path d="M14 3.500l4-2.500v9l-4-2.500z" fill="#35b7e8"/><circle cx="7" cy="5.500" r="3" fill="#e8394a"/><path d="M7 11v3M3.500 14.500h7" stroke="#35b7e8" stroke-width="1.200"/></svg>
  <!-- tray -->
  <svg class="i" style="left:739px;top:9px" width="9" height="6" viewBox="0 0 9 6"><path d="M.5 5l4-4 4 4" fill="none" stroke="#e8e8e8" stroke-width="1"/></svg>
  <svg class="i" style="left:760px;top:6.500px" width="8" height="11" viewBox="0 0 8 11"><rect x="1" y="1.500" width="6" height="8" rx="1" fill="none" stroke="#c2c2c2" stroke-width="1"/><rect x="2.500" y="0" width="3" height="1.500" fill="#c2c2c2"/><circle cx="4" cy="5.500" r="1.300" fill="#c2c2c2"/></svg>
  <svg class="i" style="left:779px;top:7.500px" width="11" height="9" viewBox="0 0 11 9"><rect x="0" y="1" width="9.500" height="6" fill="#c2c2c2"/><rect x="9.500" y="3" width="1.500" height="2.500" fill="#c2c2c2"/><path d="M1 0h3" stroke="#c2c2c2"/></svg>
  <svg class="i" style="left:798px;top:7.500px" width="14" height="9" viewBox="0 0 14 9"><path d="M3.500 9a3 3 0 0 1-.3-6 4 4 0 0 1 7.500 1 2.600 2.600 0 0 1 .3 5z" fill="#cccccc"/></svg>
  <svg class="i" style="left:820px;top:6.500px" width="12" height="11" viewBox="0 0 12 11"><path d="M0 3.500h2.500l3-3v10l-3-3h-2.500z" fill="none" stroke="#c2c2c2" stroke-width="1"/><path d="M7.500 3.500a3 3 0 0 1 0 4M9.500 2a5 5 0 0 1 0 7" fill="none" stroke="#c2c2c2" stroke-width=".9"/></svg>
  <svg class="i" style="left:841px;top:7px" width="13" height="11" viewBox="0 0 13 11"><path d="M2.500 .5h10v7h-10zM.5 3v7h3" fill="none" stroke="#c2c2c2" stroke-width="1"/><path d="M5 9.500h5" stroke="#c2c2c2"/></svg>
  <svg class="i" style="left:865px;top:6.500px" width="11" height="11" viewBox="0 0 11 11"><path d="M1 10l3.500-5.500M4.500 4.500a2.200 2.200 0 1 1 2.500 2.500M3.500 7.500l2.500 1.500" fill="none" stroke="#c2c2c2" stroke-width="1.200"/></svg>
  <div class="abs" style="left:905px;top:7px;width:10px;height:10px;border-radius:50%;background:#2a6fd0;"></div>
  <div class="abs" style="left:912px;top:13px;width:4.500px;height:4.500px;border-radius:50%;background:#e8613a;"></div>
  <svg class="i" style="left:981px;top:7.500px" width="11" height="10" viewBox="0 0 14 13"><path d="M.5 .5h13v9h-6l-3 3v-3h-4z" fill="#d0d0d0"/><path d="M3 3.500h8M3 6h6" stroke="#6a6a6a" stroke-width=".8"/></svg>
  <div class="abs" style="left:1004.500px;top:0;width:1px;height:24px;background:#6a7a86;"></div>
</div>

<div class="t" style="left:484.6px;top:12.5px;color:#fff;font-size:8px;font-weight:500;transform:scaleX(0.938);">文書</div>
<div class="t" style="left:503.5px;top:12.3px;color:#fff;font-size:9.5px;transform:scaleX(0.850);">1</div>
<div class="t" style="left:513.5px;top:12.5px;color:#fff;font-size:8px;font-weight:500;transform:scaleX(0.936);">-</div>
<div class="t" style="left:522px;top:12.3px;color:#fff;font-size:9.5px;transform:scaleX(0.879);">Word</div>
<div class="t" style="left:26.7px;top:34px;color:#fff;font-size:8px;font-weight:500;transform:scaleX(0.697);">ファイル</div>
<div class="t" style="left:65.5px;top:34px;color:#fff;font-size:8px;font-weight:500;transform:scaleX(0.778);">ホーム</div>
<div class="t" style="left:104px;top:34px;color:#6a7890;font-size:8px;font-weight:500;">挿入</div>
<div class="t" style="left:137.5px;top:34px;color:#fff;font-size:8px;font-weight:500;transform:scaleX(0.725);">デザイン</div>
<div class="t" style="left:177.7px;top:34px;color:#fff;font-size:8px;font-weight:500;transform:scaleX(0.725);">レイアウト</div>
<div class="t" style="left:224.5px;top:34px;color:#fff;font-size:8px;font-weight:500;transform:scaleX(0.975);">参考資料</div>
<div class="t" style="left:273.5px;top:34px;color:#fff;font-size:8px;font-weight:500;transform:scaleX(0.896);">差し込み文書</div>
<div class="t" style="left:334.7px;top:34px;color:#fff;font-size:8px;font-weight:500;transform:scaleX(0.956);">校閲</div>
<div class="t" style="left:367.5px;top:34px;color:#fff;font-size:8px;font-weight:500;transform:scaleX(0.950);">表示</div>
<div class="t" style="left:399.8px;top:34px;color:#fff;font-size:8px;font-weight:500;transform:scaleX(0.833);">ヘルプ</div>
<div class="t" style="left:436.6px;top:34px;color:#fff;font-size:9.5px;transform:scaleX(0.858);">PDFelement</div>
<div class="t" style="left:517.5px;top:34px;color:#fff;font-size:7.5px;font-weight:500;transform:scaleX(0.876);">何をしますか</div>
<div class="t" style="left:980px;top:34px;color:#fff;font-size:8px;font-weight:500;">共有</div>
<div class="t" style="left:26.9px;top:75.5px;color:#707070;font-size:8px;transform:scaleX(0.841);">貼り付け</div>
<div class="t" style="left:69.7px;top:54px;color:#d8d8d8;font-size:8px;transform:scaleX(0.756);">切り取り</div>
<div class="t" style="left:69.7px;top:68.7px;color:#d8d8d8;font-size:8px;transform:scaleX(0.637);">コピー</div>
<div class="t" style="left:76.8px;top:74.8px;color:#e6e6e6;font-size:8px;transform:scaleX(0.805);">ページ</div>
<div class="t" style="left:70px;top:84.7px;color:#6a6a6a;font-size:8px;transform:scaleX(0.844);">書式のコピー/貼り付け</div>
<div class="t" style="left:59px;top:99px;color:#666;font-size:8px;transform:scaleX(0.696);">クリップボード</div>
<div class="t" style="left:119px;top:74px;color:#e2e2e2;font-size:8px;transform:scaleX(0.875);">表</div>
<div class="t" style="left:119px;top:99.5px;color:#e2e2e2;font-size:8px;transform:scaleX(0.875);">表</div>
<div class="t" style="left:156px;top:58.7px;color:#777;font-size:9px;transform:scaleX(0.825);clip-path:inset(0 3px 0 0);">游明朝 (本文のフ</div>
<div class="t" style="left:222.3px;top:58.7px;color:#6a6a6a;font-size:9.5px;transform:scaleX(0.957);clip-path:inset(0 3.5px 0 0);">10.5</div>
<div class="t" style="left:248.5px;top:58.5px;color:#6a6a6a;font-size:11.5px;transform:scaleX(1.043);">A</div>
<div class="t" style="left:262.5px;top:59px;color:#6a6a6a;font-size:9.5px;transform:scaleX(0.946);">A</div>
<div class="t" style="left:280px;top:58.5px;color:#7a7a7a;font-size:9.5px;">Aa</div>
<div class="t" style="left:334px;top:58.3px;color:#707070;font-size:10.5px;transform:scaleX(1.140);">A</div>
<div class="t" style="left:158.5px;top:79px;color:#6a6a6a;font-size:10px;font-weight:bold;transform:scaleX(0.898);">B</div>
<div class="t" style="left:173.5px;top:79px;color:#6a6a6a;font-size:10px;font-family:'Liberation Serif','Noto Serif CJK SC',serif;font-style:italic;transform:scaleX(1.047);transform-origin:0 50%;">I</div>
<div class="t" style="left:186px;top:79px;color:#6a6a6a;font-size:10px;transform:scaleX(0.968);text-decoration:underline;">U</div>
<div class="t" style="left:206.5px;top:79.5px;color:#8a8a8a;font-size:7px;transform:scaleX(0.929);text-decoration:line-through;">abc</div>
<div class="t" style="left:223px;top:79.5px;color:#777;font-size:9.5px;transform:scaleX(0.947);">x</div>
<div class="t" style="left:227.8px;top:83px;color:#6f9fd6;font-size:5px;transform:scaleX(0.791);">2</div>
<div class="t" style="left:236.5px;top:79.5px;color:#777;font-size:9.5px;transform:scaleX(0.947);">x</div>
<div class="t" style="left:241.3px;top:75.5px;color:#6f9fd6;font-size:5px;transform:scaleX(0.791);">2</div>
<div class="t" style="left:254px;top:79px;color:#7fb0e6;font-size:10.5px;transform:scaleX(1.140);-webkit-text-stroke:0.6px #6f9fd6;color:transparent;">A</div>
<div class="t" style="left:298px;top:78px;color:#777;font-size:10px;transform:scaleX(1.199);">A</div>
<div class="t" style="left:319.5px;top:79px;color:#7d7d7d;font-size:10px;font-weight:bold;transform:scaleX(1.037);">A</div>
<div class="t" style="left:233.4px;top:99.5px;color:#666;font-size:8px;transform:scaleX(0.669);">フォント</div>
<div class="t" style="left:349.4px;top:99.4px;color:#e2e2e2;font-size:8px;transform:scaleX(0.659);">アドイン</div>
<div class="t" style="left:421px;top:99.5px;color:#666;font-size:8px;transform:scaleX(0.969);">段落</div>
<div class="t" style="left:481px;top:99.5px;color:#e2e2e2;font-size:8px;transform:scaleX(0.667);">リンク</div>
<div class="t" style="left:477.7px;top:67.7px;color:#dcdcdc;font-size:8px;transform:scaleX(0.677);">ブックマーク</div>
<div class="t" style="left:483.8px;top:83px;color:#e6e6e6;font-size:8px;transform:scaleX(0.744);">相互参照</div>
<div class="t" style="left:476.8px;top:52.8px;color:#e9e9e9;font-size:8px;transform:scaleX(0.592);">リンク</div>
<div class="t" style="left:425px;top:99.4px;color:#e4e4e4;font-size:8px;transform:scaleX(0.699);">メディア</div>
<div class="t" style="left:431px;top:85.3px;color:#e8e8e8;font-size:8px;transform:scaleX(0.667);">ビデオ</div>
<div class="t" style="left:389px;top:58.5px;color:#dedede;font-size:17px;font-family:'Liberation Serif','Noto Serif CJK SC',serif;transform:scaleX(1.034);">W</div>
<div class="t" style="left:536px;top:61.5px;color:#686868;font-size:9px;font-family:'Liberation Serif','Noto Serif CJK SC',serif;">あア亜</div>
<div class="t" style="left:583.5px;top:61.5px;color:#686868;font-size:9px;font-family:'Liberation Serif','Noto Serif CJK SC',serif;">あア亜</div>
<div class="t" style="left:629px;top:61.5px;color:#8a8a8a;font-size:10.5px;transform:scaleX(0.968);">あア亜</div>
<div class="t" style="left:677px;top:61.5px;color:#8a8a8a;font-size:9.5px;transform:scaleX(0.947);">あア亜</div>
<div class="t" style="left:720px;top:61px;color:#a0a0a0;font-size:13.5px;transform:scaleX(0.975);">あア亜</div>
<div class="t" style="left:771px;top:61.5px;color:#808080;font-size:10.5px;font-family:'Liberation Serif','Noto Serif CJK SC',serif;">あア亜</div>
<div class="t" style="left:820.5px;top:61.5px;color:#9a9a9a;font-size:9px;font-family:'Liberation Serif','Noto Serif CJK SC',serif;font-style:italic;transform:scaleX(1.036);transform-origin:0 50%;">あア亜</div>
<div class="t" style="left:868px;top:61.5px;color:#8a8a8a;font-size:9px;font-family:'Liberation Serif','Noto Serif CJK SC',serif;font-style:italic;transform:scaleX(1.036);">あア亜</div>
<div class="t" style="left:545.5px;top:78.1px;color:#7a7a7a;font-size:8px;transform:scaleX(1.031);">標準</div>
<div class="t" style="left:585.5px;top:78.1px;color:#7a7a7a;font-size:8px;transform:scaleX(0.938);">行間詰め</div>
<div class="t" style="left:630px;top:78.1px;color:#8a8a8a;font-size:8px;transform:scaleX(0.897);">見出し 1</div>
<div class="t" style="left:677.5px;top:78.1px;color:#8a8a8a;font-size:8px;transform:scaleX(0.929);">見出し 2</div>
<div class="t" style="left:731.5px;top:78.1px;color:#a0a0a0;font-size:8px;transform:scaleX(0.969);">表題</div>
<div class="t" style="left:779px;top:78.1px;color:#9a9a9a;font-size:8px;transform:scaleX(0.969);">副題</div>
<div class="t" style="left:826.5px;top:78.1px;color:#8a8a8a;font-size:8px;transform:scaleX(0.969);">斜体</div>
<div class="t" style="left:865.5px;top:78.1px;color:#8a8a8a;font-size:8px;transform:scaleX(0.969);">強調斜体</div>
<div class="t" style="left:539px;top:78.5px;color:#8a8a8a;font-size:6px;transform:scaleX(0.900);">↵</div>
<div class="t" style="left:579px;top:78.5px;color:#8a8a8a;font-size:6px;transform:scaleX(0.900);">↵</div>
<div class="t" style="left:703px;top:99.6px;color:#555;font-size:8px;transform:scaleX(0.719);">スタイル</div>
<div class="t" style="left:527px;top:99.5px;color:#e2e2e2;font-size:8px;transform:scaleX(0.688);">コメント</div>
<div class="t" style="left:578px;top:99.5px;color:#e2e2e2;font-size:8px;transform:scaleX(0.681);">ヘッダーとフッター</div>
<div class="t" style="left:755px;top:99.5px;color:#e2e2e2;font-size:8px;transform:scaleX(0.756);">テキスト</div>
<div class="t" style="left:898px;top:99.5px;color:#dcdcdc;font-size:8px;transform:scaleX(0.938);">記号</div>
<div class="t" style="left:920px;top:99.5px;color:#e6e6e6;font-size:8px;transform:scaleX(0.625);">特殊文字</div>
<div class="t" style="left:941.8px;top:53.6px;color:#6a6a6a;font-size:8px;transform:scaleX(0.950);">検索</div>
<div class="t" style="left:941.8px;top:68.8px;color:#6a6a6a;font-size:8px;transform:scaleX(0.950);">置換</div>
<div class="t" style="left:941.8px;top:83.3px;color:#6a6a6a;font-size:8px;transform:scaleX(0.950);">選択</div>
<div class="t" style="left:940.5px;top:99.5px;color:#666;font-size:8px;transform:scaleX(0.969);">編集</div>
<div class="t" style="left:23.3px;top:628.3px;color:#3a3a3a;font-size:9.5px;font-family:'Liberation Serif','Noto Serif CJK SC',serif;transform:scaleX(1.046);">1/1</div>
<div class="t" style="left:37.5px;top:628.5px;color:#444;font-size:8px;transform:scaleX(0.860);">ページ</div>
<div class="t" style="left:70.5px;top:628.3px;color:#444;font-size:9.5px;font-family:'Liberation Serif','Noto Serif CJK SC',serif;transform:scaleX(0.842);">0</div>
<div class="t" style="left:78px;top:628.5px;color:#444;font-size:8px;transform:scaleX(0.969);">文字</div>
<div class="t" style="left:127px;top:628.5px;color:#444;font-size:8px;transform:scaleX(0.958);">日本語</div>
<div class="t" style="left:769.5px;top:628.5px;color:#333;font-size:8px;transform:scaleX(0.969);">表示設定</div>
<div class="t" style="left:983px;top:628.5px;color:#444;font-size:8px;transform:scaleX(1.026);">100%</div>
<div class="t" style="left:76px;top:649px;color:#3a3a3a;font-size:8.5px;font-weight:500;">ここに入力して検索</div>
<div class="t" style="left:887.5px;top:648.5px;color:#e8e8e8;font-size:9px;font-weight:bold;transform:scaleX(1.054);">あ</div>
<div class="t" style="left:939px;top:642.7px;color:#e0e0e0;font-size:7.5px;">14:54</div>
<div class="t" style="left:928px;top:654.7px;color:#e0e0e0;font-size:7.5px;transform:scaleX(1.092);">2021/02/12</div>
<div class="t" style="left:204.7px;top:74px;color:#e7e7e7;font-size:8px;">SmartArt</div>
<div class="t" style="left:240px;top:74px;color:#e9e9e9;font-size:8px;transform:scaleX(0.625);">グラフ</div>
<div class="t" style="left:262px;top:74px;color:#e9e9e9;font-size:8px;transform:scaleX(0.707);">スクリーン</div>
<div class="t" style="left:270px;top:85px;color:#e9e9e9;font-size:8px;transform:scaleX(0.625);">ショット</div>
<div class="t" style="left:185px;top:74px;color:#e9e9e9;font-size:8px;transform:scaleX(0.875);">図形</div>
<div class="t" style="left:157px;top:74px;color:#e9e9e9;font-size:8px;transform:scaleX(0.875);">画像</div>
</div>
<div id="shade" class="abs"></div>
<div id="barL" class="abs"></div>
<div id="barR" class="abs"></div>
<div id="topgray" class="abs"></div>
<!-- video player overlay -->
<div class="abs" style="left:5.500px;top:599px;width:1019px;height:2.200px;background:rgba(255,255,255,0.14);filter:blur(.4px);"></div>
<div class="abs" style="left:-7.200px;top:593.800px;width:12.600px;height:12.600px;border-radius:50%;border:1.400px solid #3a9fda;box-sizing:border-box;filter:blur(.3px);"></div>
<svg class="i" style="left:477px;top:628px" width="13" height="8" viewBox="0 0 13 8"><path d="M1.800 6.500a5.300 5.300 0 0 1 10.200 -1" fill="none" stroke="#fff" stroke-width="1.300"/><path d="M0 2.500l1.200 5 3.600-2.800z" fill="#fff"/></svg>
<svg class="i" style="left:509.500px;top:628.500px" width="10" height="12" viewBox="0 0 10 12"><path d="M1 .8l7.500 5-7.500 5z" fill="none" stroke="#fff" stroke-width="1.300" stroke-linejoin="round"/></svg>
<svg class="i" style="left:538px;top:628px" width="13" height="8" viewBox="0 0 13 8"><path d="M11.200 6.500a5.300 5.300 0 0 0 -10.200 -1" fill="none" stroke="#fff" stroke-width="1.300"/><path d="M13 2.500l-1.200 5 -3.600-2.800z" fill="#fff"/></svg>
<svg class="i" style="left:971px;top:627px" width="15" height="14" viewBox="0 0 15 14"><path d="M1 12.700l.9-3.600 8.300-7.300a1.900 1.900 0 0 1 2.700 .2l.6.700a1.900 1.900 0 0 1-.2 2.700l-8.400 7.200z" fill="none" stroke="#fff" stroke-width="1.300" stroke-linejoin="round"/><path d="M9 3l3 3.300" stroke="#fff" stroke-width="1"/></svg>
<svg class="i" style="left:1002.500px;top:630px" width="13" height="9" viewBox="0 0 13 9"><rect x=".7" y=".7" width="11.600" height="7.600" rx=".8" fill="none" stroke="#fff" stroke-width="1.400"/><rect x="6" y="2" width="5" height="2.500" fill="#fff"/></svg>

<div class="t" style="left:479.3px;top:631.2px;color:#fff;font-size:7.5px;transform:scaleX(0.923);">10</div>
<div class="t" style="left:540px;top:631.2px;color:#fff;font-size:7.5px;transform:scaleX(0.959);">30</div>
</body>
</html>
